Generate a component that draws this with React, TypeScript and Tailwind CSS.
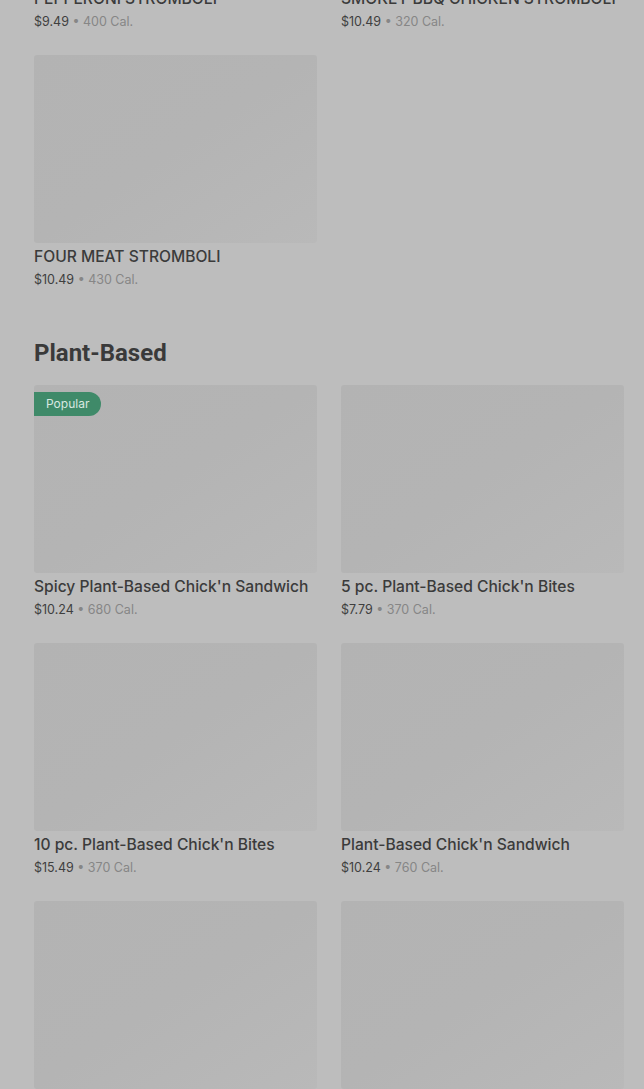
import React from "react";

type Item = { name: string; price: string; cal: string; popular?: boolean };

const stromboli: Item[] = [
  { name: "PEPPERONI STROMBOLI", price: "$9.49", cal: "400 Cal." },
  { name: "SMOKEY BBQ CHICKEN STROMBOLI", price: "$10.49", cal: "320 Cal." },
  { name: "FOUR MEAT STROMBOLI", price: "$10.49", cal: "430 Cal." },
];

const plantBased: Item[] = [
  { name: "Spicy Plant-Based Chick'n Sandwich", price: "$10.24", cal: "680 Cal.", popular: true },
  { name: "5 pc. Plant-Based Chick'n Bites", price: "$7.79", cal: "370 Cal." },
  { name: "10 pc. Plant-Based Chick'n Bites", price: "$15.49", cal: "370 Cal." },
  { name: "Plant-Based Chick'n Sandwich", price: "$10.24", cal: "760 Cal." },
  { name: "Plant-Based Chick'n Wrap", price: "$9.99", cal: "520 Cal." },
  { name: "Plant-Based Chick'n Nuggets", price: "$8.49", cal: "410 Cal." },
];

function MenuCard({ item }: { item: Item }) {
  return (
    <div className="flex flex-col">
      <div className="relative h-[188px] rounded-[3px] bg-gradient-to-br from-[#b3b3b3] via-[#b4b4b4] to-[#b9b9b9]">
        {item.popular && (
          <span className="absolute left-0 top-[7px] rounded-r-full bg-[#3f8a69] px-3 py-[3px] text-[12px] leading-[18px] text-[#d9e8e0]">
            Popular
          </span>
        )}
      </div>
      <p className="mt-[3px] truncate text-[15.6px] font-medium leading-[22px] text-[#3b3b3b]">{item.name}</p>
      <p className="mt-[1px] text-[12.5px] leading-[22px]">
        <span className="text-[#3f3f3f]">{item.price}</span>
        <span className="text-[#868686]"> • {item.cal}</span>
      </p>
    </div>
  );
}

export default function App() {
  return (
    <div
      className="min-h-[1089px] overflow-hidden bg-[#bdbdbd] pl-[34px] pr-[20px]"
      style={{ fontFamily: "Inter, Roboto, 'Noto Sans', sans-serif" }}
    >
      <div className="-mt-[203px] grid grid-cols-2 gap-x-6 gap-y-[22px]">
        {stromboli.map((item) => (
          <MenuCard key={item.name} item={item} />
        ))}
      </div>

      <h2
        className="mt-[46px] mb-[16px] text-[24px] font-bold leading-[32px] text-[#3a3a3a]"
        style={{ fontFamily: "Roboto, sans-serif" }}
      >
        Plant-Based
      </h2>

      <div className="grid grid-cols-2 gap-x-6 gap-y-[22px]">
        {plantBased.map((item) => (
          <MenuCard key={item.name} item={item} />
        ))}
      </div>
    </div>
  );
}
